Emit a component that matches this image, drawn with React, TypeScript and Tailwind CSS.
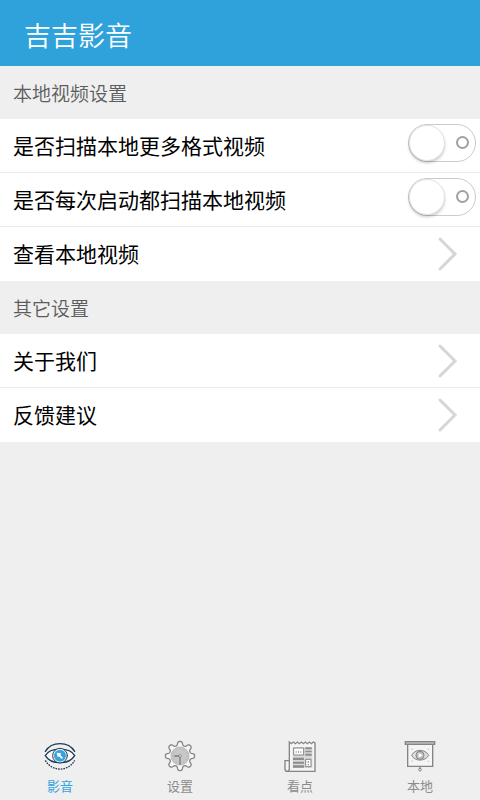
import { useState, type ReactNode } from "react";

const gearPath =
  Array.from({ length: 160 }, (_, i) => {
    const angle = (i / 160) * Math.PI * 2;
    const radius = 38 + 6 * Math.tanh(1.8 * Math.cos(8 * angle));
    const x = 90 + radius * Math.cos(angle);
    const y = 78 + radius * Math.sin(angle);
    return `${i === 0 ? "M" : "L"}${x.toFixed(2)} ${y.toFixed(2)}`;
  }).join("") + "Z";

function EyeIcon() {
  return (
    <svg viewBox="36 24 108 108" className="size-9" fill="none" aria-hidden="true">
      <g stroke="#1f3a58" strokeLinecap="round">
        <path d="M46 77C60 51 120 51 134 77C118 105 62 105 46 77Z" fill="#f7f9fa" strokeWidth="4" />
        <path d="M46 64C65 33 115 33 134 64" strokeWidth="4" />
        <path d="M46 91C65 126 115 126 134 91" strokeWidth="4" strokeLinecap="butt" strokeDasharray="5 3" />
        <circle cx="90" cy="77" r="22" fill="#fff" strokeWidth="3" />
      </g>
      <circle cx="90" cy="77" r="18" fill="#35a3df" />
      <path d="M80 68L93 70L91 75L99 83L95 87L87 79L83 82Z" fill="#fff" />
    </svg>
  );
}

function GearIcon() {
  return (
    <svg viewBox="36 24 108 108" className="size-9" fill="none" aria-hidden="true">
      <path d={gearPath} fill="#f7f7f7" stroke="#858585" strokeWidth="4" strokeLinejoin="round" />
      <circle cx="90" cy="78" r="27" fill="#c8c8c8" stroke="#a6a6a6" strokeWidth="2" />
      <circle cx="90" cy="78" r="21" stroke="#999" strokeWidth="3" strokeDasharray="2 9" />
      <path d="M73 78H90V104" stroke="#7a7a7a" strokeWidth="4" />
      <circle cx="90" cy="78" r="4" fill="#ddd" stroke="#7a7a7a" strokeWidth="2" />
    </svg>
  );
}

function NewsIcon() {
  return (
    <svg viewBox="36 24 108 108" className="size-9" fill="none" aria-hidden="true">
      <path
        d="M58 36L64 41L70 36L76 41L82 36L88 41L94 36L100 41L106 36L112 41L118 36L124 41L130 36L135 39V124H52Q45 124 45 116V92H58Z"
        fill="#f5f5f5"
        stroke="#858585"
        strokeWidth="4"
      />
      <path d="M58 92V116Q58 124 51 124" stroke="#858585" strokeWidth="4" />
      <path d="M68 51H127V114H68Z" fill="#d9d9d9" />
      <g stroke="#858585" strokeWidth="3">
        <path d="M71 54H101V75H71Z" fill="#fff" />
        <path d="M107 88H123V110H107Z" fill="#fff" />
      </g>
      <path d="M106 52H125V58H106ZM106 62H125V67H106ZM106 71H125V77H106Z" fill="#8d8d8d" />
      <path d="M69 83H102V90H69ZM69 95H102V101H69ZM69 106H102V113H69Z" fill="#8d8d8d" />
      <path d="M77 66H97" stroke="#888" strokeWidth="4" strokeDasharray="3 4" />
      <path d="M115 94V106" stroke="#888" strokeWidth="4" strokeDasharray="4 4" />
    </svg>
  );
}

function ScreenIcon() {
  return (
    <svg viewBox="36 24 108 108" className="size-9" fill="none" aria-hidden="true">
      <g stroke="#858585" strokeWidth="4">
        <path d="M53 43H128V109H53Z" fill="#f5f5f5" />
        <path d="M46 35H134V43H46Z" fill="#bdbdbd" />
        <path d="M90 109V114" />
        <circle cx="90" cy="119" r="4" strokeWidth="3" />
        <path d="M65 76C74 56 106 56 116 76C106 95 74 95 65 76Z" fill="#dedede" strokeWidth="3" />
        <circle cx="90" cy="76" r="12" fill="#c0c0c0" strokeWidth="3" />
      </g>
      <path d="M86 69L98 76L86 83Z" fill="#fff" />
      <path d="M66 56V60M115 56V60M66 92V96M115 92V96" stroke="#b5b5b5" strokeWidth="3" />
    </svg>
  );
}

function SectionTitle({ children }: { children: ReactNode }) {
  return (
    <h2 className="flex h-[53px] items-center px-[13px] pt-px text-[19px] font-[350] text-[#5c5c5c]">
      {children}
    </h2>
  );
}

const rowClass = "flex h-[54px] w-full items-center justify-between bg-white pl-[13px] text-left";

function ToggleRow({ label }: { label: string }) {
  const [on, setOn] = useState(false);
  return (
    <label className={`${rowClass} cursor-pointer pr-1`}>
      {label}
      <span className="relative mb-[6px] flex h-[38px] w-[68px] shrink-0 items-center justify-end rounded-full border border-[#cbcbcb] bg-white pr-[6px] has-checked:bg-[#2fa2db]">
        <input
          type="checkbox"
          role="switch"
          checked={on}
          onChange={(event) => setOn(event.target.checked)}
          className="peer absolute inset-0 cursor-pointer appearance-none rounded-full"
        />
        <span className="pointer-events-none absolute top-0 left-0 size-9 rounded-full border border-[#e2e2e2] bg-white shadow-[0_2px_3px_rgba(0,0,0,0.2)] peer-checked:left-[30px]" />
        <span className="pointer-events-none size-[13px] rounded-full border-2 border-[#a0a0a0] peer-checked:hidden" />
      </span>
    </label>
  );
}

function LinkRow({ label }: { label: string }) {
  return (
    <button type="button" className={`${rowClass} cursor-pointer pr-[22px]`}>
      {label}
      <svg viewBox="0 0 20 34" className="h-[34px] w-5 shrink-0" fill="none" aria-hidden="true">
        <path d="M2 2L17 17L2 32" stroke="#d6d6d6" strokeWidth="3" strokeLinecap="round" />
      </svg>
    </button>
  );
}

const tabs = [
  { label: "影音", icon: <EyeIcon /> },
  { label: "设置", icon: <GearIcon /> },
  { label: "看点", icon: <NewsIcon /> },
  { label: "本地", icon: <ScreenIcon /> },
];

export default function App() {
  const [active, setActive] = useState("影音");
  return (
    <div className="flex min-h-screen flex-col bg-[#efefef] font-['Noto_Sans_CJK_SC',sans-serif] text-[21px] text-black">
      <header className="flex h-[66px] items-center bg-[#2fa2db] px-6 pt-1">
        <h1 className="text-[27px] font-[350] text-white">吉吉影音</h1>
      </header>
      <main className="flex-1">
        <section>
          <SectionTitle>本地视频设置</SectionTitle>
          <div className="divide-y divide-[#e9e9e9]">
            <ToggleRow label="是否扫描本地更多格式视频" />
            <ToggleRow label="是否每次启动都扫描本地视频" />
            <LinkRow label="查看本地视频" />
          </div>
        </section>
        <section>
          <SectionTitle>其它设置</SectionTitle>
          <div className="divide-y divide-[#e9e9e9]">
            <LinkRow label="关于我们" />
            <LinkRow label="反馈建议" />
          </div>
        </section>
      </main>
      <nav className="grid grid-cols-4 pt-2 pb-[6px]">
        {tabs.map((tab) => (
          <button
            key={tab.label}
            type="button"
            aria-current={active === tab.label ? "page" : undefined}
            onClick={() => setActive(tab.label)}
            className="flex cursor-pointer flex-col items-center gap-1 text-[13px] leading-4 text-[#8c8c8c] aria-[current=page]:text-[#35a3df]"
          >
            {tab.icon}
            {tab.label}
          </button>
        ))}
      </nav>
    </div>
  );
}
